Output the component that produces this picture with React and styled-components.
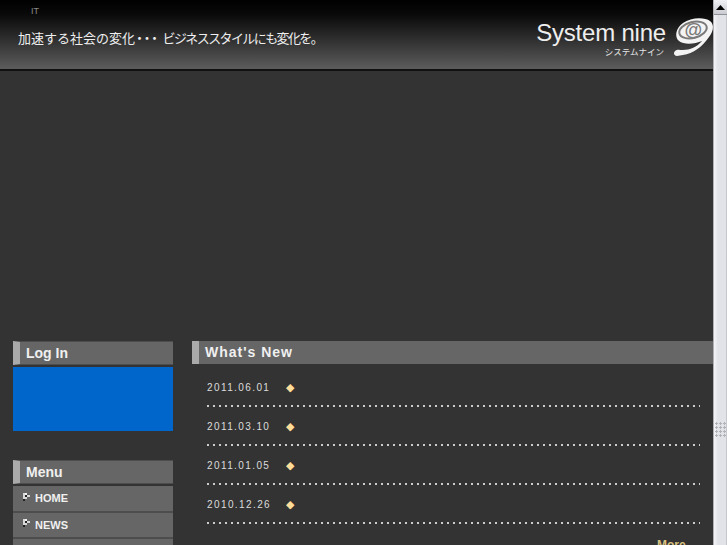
import styled, { createGlobalStyle } from "styled-components";

const GlobalStyle = createGlobalStyle`
  html, body {
    margin: 0;
    padding: 0;
    height: 100%;
    overflow: hidden;
    background: #333333;
  }
`;

const news = ["2011.06.01", "2011.03.10", "2011.01.05", "2010.12.26"];
const menu = ["HOME", "NEWS", ""];

const App = () => {
  return (
    <Viewport>
      <GlobalStyle />
      <Page>
        <Header>
          <HeaderText>
            <Tagline>IT</Tagline>
            <Catch>
              加速する社会の変化
              <CatchDots>・・・</CatchDots>
              <CatchKana>ビジネススタイルにも変化を。</CatchKana>
            </Catch>
          </HeaderText>
          <Logo>
            <LogoText>
              <LogoName>System nine</LogoName>
              <LogoKana>システムナイン</LogoKana>
            </LogoText>
            <LogoMark />
          </Logo>
        </Header>
        <Hero />
        <Columns>
          <Side>
            <SideTitle>Log In</SideTitle>
            <LoginBox />
            <SideTitle>Menu</SideTitle>
            <MenuList>
              {menu.map((item, i) => (
                <MenuItem key={i}>
                  {item && <MenuArrow />}
                  {item}
                </MenuItem>
              ))}
            </MenuList>
          </Side>
          <Main>
            <MainTitle>What's New</MainTitle>
            <NewsList>
              {news.map((date) => (
                <NewsRow key={date}>
                  <NewsDate>{date}</NewsDate>
                  <Diamond>◆</Diamond>
                </NewsRow>
              ))}
            </NewsList>
            <More>More</More>
          </Main>
        </Columns>
      </Page>
      <Scrollbar>
        <ScrollButton>
          <ScrollArrow viewBox="0 0 9 5">
            <path d="M0 5 L4.5 0 L9 5 Z" fill="#000" />
          </ScrollArrow>
        </ScrollButton>
        <ScrollThumb>
          <Grip />
        </ScrollThumb>
      </Scrollbar>
    </Viewport>
  );
};

const LogoMark = () => (
  <LogoSvg viewBox="0 0 40 40">
    <path
      d="M4 39 C1 39 0 36 2 34 C4 32 7 33 10 33 C17 33 24 30 29 24 C22 27 11 28 6 24 C1 20 3 11 10 6 C18 0 32 0 37 4 C42 8 40 15 36 20 C30 29 20 37 10 38 C8 38 6 39 4 39 Z"
      fill="#f4f4f4"
    />
    <ellipse
      cx="20"
      cy="13"
      rx="14"
      ry="8"
      transform="rotate(-14 20 13)"
      fill="none"
      stroke="#7a7a7a"
      strokeWidth="2"
    />
    <AtSign x="20" y="19" textAnchor="middle">
      @
    </AtSign>
  </LogoSvg>
);

const MenuArrow = () => (
  <ArrowSvg viewBox="0 0 7 8">
    <rect x="0" y="0" width="2" height="8" fill="#d8d8d8" />
    <rect x="2" y="0" width="2" height="2" fill="#f4f4f4" />
    <rect x="2" y="2" width="2" height="2" fill="#222222" />
    <rect x="4" y="2" width="3" height="2" fill="#d8d8d8" />
    <rect x="2" y="4" width="2" height="2" fill="#d8d8d8" />
    <rect x="0" y="6" width="2" height="2" fill="#222222" />
  </ArrowSvg>
);

const Viewport = styled.div`
  display: flex;
  width: 727px;
  height: 545px;
  overflow: hidden;
  background: #333333;
`;

const Page = styled.div`
  flex: none;
  width: 713px;
`;

const Header = styled.header`
  display: flex;
  justify-content: space-between;
  height: 69px;
  background: linear-gradient(#000000 0, #0a0a0a 15px, #5c5c5c 69px);
  border-bottom: 2px solid #111111;
`;

const HeaderText = styled.div`
  padding: 6px 0 0 31px;
`;

const Tagline = styled.div`
  font: 9px/10px "Liberation Sans", sans-serif;
  color: #8a8a8a;
`;

const Catch = styled.div`
  margin: 14px 0 0 -13px;
  font: 13px/16px "Noto Sans CJK JP", sans-serif;
  color: #eeeeee;
  white-space: pre;
`;

const CatchDots = styled.span`
  letter-spacing: -5.5px;
  margin: 0 7px 0 -2px;
`;

const CatchKana = styled.span`
  letter-spacing: -1.6px;
`;

const Logo = styled.div`
  display: flex;
  align-items: flex-start;
  padding-top: 17px;
`;

const LogoText = styled.div`
  display: flex;
  flex-direction: column;
  align-items: flex-end;
  margin-right: 7px;
`;

const LogoName = styled.div`
  font: 24px/26px "Liberation Sans", sans-serif;
  letter-spacing: -0.2px;
  color: #eeeeee;
  margin-top: 3px;
`;

const LogoKana = styled.div`
  font: 8.5px/11px "Noto Sans CJK JP", sans-serif;
  color: #e6e6e6;
  margin-right: 2px;
`;

const LogoSvg = styled.svg`
  width: 40px;
  height: 40px;
`;

const AtSign = styled.text`
  font: italic bold 18px "Liberation Sans", sans-serif;
  fill: #7a7a7a;
`;

const Hero = styled.div`
  height: 270px;
`;

const Columns = styled.div`
  display: flex;
  padding-left: 13px;
  gap: 19px;
`;

const Side = styled.aside`
  flex: none;
  width: 160px;
`;

const SideTitle = styled.h2`
  box-sizing: border-box;
  margin: 0;
  height: 24px;
  padding-left: 6px;
  background: #666666;
  border-left: 7px solid #aaaaaa;
  border-top: 1px solid #4d4d4d;
  border-bottom: 1px solid #4d4d4d;
  font: bold 14px/22px "Liberation Sans", sans-serif;
  color: #f0f0f0;
`;

const LoginBox = styled.div`
  height: 64px;
  margin: 2px 0 29px;
  background: #0066cc;
`;

const MenuList = styled.ul`
  list-style: none;
  margin: 2px 0 0;
  padding: 0;
`;

const MenuItem = styled.li`
  box-sizing: border-box;
  display: flex;
  align-items: center;
  height: 26.5px;
  padding-left: 10px;
  background: #666666;
  border-bottom: 2px solid #4d4d4d;
  font: bold 11px/14px "Liberation Sans", sans-serif;
  color: #f0f0f0;
`;

const ArrowSvg = styled.svg`
  flex: none;
  width: 7px;
  height: 8px;
  margin: -3px 5px 0 0;
`;

const Main = styled.main`
  flex: 1;
  min-width: 0;
`;

const MainTitle = styled.h2`
  box-sizing: border-box;
  margin: 0;
  height: 23px;
  padding-left: 6px;
  background: #666666;
  border-left: 7px solid #aaaaaa;
  font: bold 14px/22px "Liberation Sans", sans-serif;
  color: #f0f0f0;
  letter-spacing: 1px;
`;

const NewsList = styled.div`
  padding: 5px 13px 0 15px;
`;

const NewsRow = styled.div`
  display: flex;
  align-items: center;
  height: 39px;
  box-sizing: border-box;
  padding-bottom: 2px;
  background-image: linear-gradient(90deg, #cccccc 2px, transparent 2px);
  background-size: 6px 2px;
  background-position: left bottom 1px;
  background-repeat: repeat-x;
`;

const NewsDate = styled.span`
  width: 79px;
  font: 10px/14px "Liberation Sans", sans-serif;
  letter-spacing: 1.4px;
  color: #dddddd;
`;

const Diamond = styled.span`
  font: 11px/14px "DejaVu Sans", sans-serif;
  color: #ffdd99;
`;

const More = styled.div`
  margin: 13px 0 0 465px;
  font: bold 12px/14px "Liberation Sans", sans-serif;
  color: #d8c080;
`;

const Scrollbar = styled.div`
  position: relative;
  flex: none;
  width: 14px;
  height: 545px;
  box-sizing: border-box;
  background: #e4e5ea;
  border-left: 1px solid #aeb0b6;
`;

const ScrollButton = styled.div`
  display: flex;
  align-items: center;
  justify-content: center;
  height: 14px;
  background: linear-gradient(#f0f1f4, #c9cbd2);
  border-bottom: 1px solid #8f9197;
`;

const ScrollArrow = styled.svg`
  width: 9px;
  height: 5px;
`;

const ScrollThumb = styled.div`
  position: absolute;
  left: 0;
  right: 0;
  top: 15px;
  bottom: 0;
  box-sizing: border-box;
  padding-top: 407px;
  display: flex;
  justify-content: center;
  align-items: flex-start;
  background: linear-gradient(90deg, #f4f5f8, #e2e3e8 30%, #e2e3e8 90%, #b4b6bc);
`;

const Grip = styled.div`
  width: 11px;
  height: 16px;
  background-image: radial-gradient(circle at 1.5px 1.5px, #b0b2b8 1px, transparent 1.2px);
  background-size: 4px 4px;
`;

export default App;
